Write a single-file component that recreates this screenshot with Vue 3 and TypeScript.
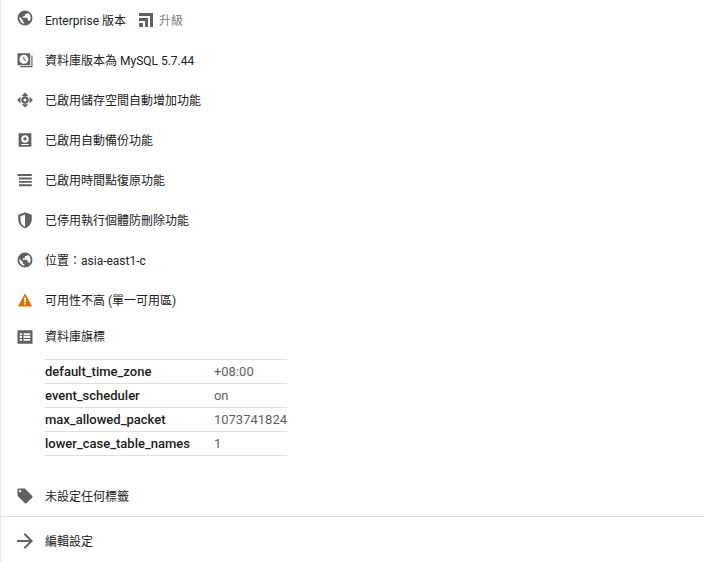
<script setup lang="ts">
interface SummaryRow {
  icon: string;
  text: string;
  upgrade?: boolean;
}

const rows: SummaryRow[] = [
  { icon: 'public', text: 'Enterprise 版本', upgrade: true },
  { icon: 'version', text: '資料庫版本為 MySQL 5.7.44' },
  { icon: 'storage', text: '已啟用儲存空間自動增加功能' },
  { icon: 'backup', text: '已啟用自動備份功能' },
  { icon: 'lines', text: '已啟用時間點復原功能' },
  { icon: 'shield', text: '已停用執行個體防刪除功能' },
  { icon: 'public', text: '位置：asia-east1-c' },
  { icon: 'warning', text: '可用性不高 (單一可用區)' },
];

const flags = [
  { name: 'default_time_zone', value: '+08:00' },
  { name: 'event_scheduler', value: 'on' },
  { name: 'max_allowed_packet', value: '1073741824' },
  { name: 'lower_case_table_names', value: '1' },
];
</script>

<template>
  <div class="panel">
    <div v-for="row in rows" :key="row.text" class="row">
      <span class="icon-box">
        <svg viewBox="0 0 24 24" width="18" height="18" :class="{ warn: row.icon === 'warning' }">
          <path v-if="row.icon === 'public'" fill-rule="evenodd" d="M12 2a10 10 0 1 0 0 20 10 10 0 0 0 0-20zM11 19.500c-3.800-.5-6.500-3.700-6.500-7.500 0-.6.100-1.100.2-1.600L9 14.500v1.300c0 1.100.9 2 2 2zM18 16.200c-.4-.7-1-1.200-1.900-1.200h-.6v-2.500c0-.6-.4-1-1-1H9V9.500h2c.6 0 1-.4 1-1V6.500h2c1 0 1.700-.6 1.800-1.500 2.300 1.200 3.700 4 3.700 7 0 1.600-.6 3-1.500 4.200z" />
          <template v-else-if="row.icon === 'version'">
            <path fill-rule="evenodd" d="M2 3h17v16H2zM10.500 5a6 6 0 1 0 0 12 6 6 0 0 0 0-12z" />
            <path d="M9.800 7.500h1.400v3.200l2.500 1.500-.7 1.100-3.200-1.900z" />
            <path d="M20.500 6H22v15.500H5.500V20h15z" />
          </template>
          <template v-else-if="row.icon === 'storage'">
            <path d="M12 2 16.500 6.500h-9zM12 22 7.500 17.500h9zM1.500 12 6 7.500v9zM22.500 12 18 16.500v-9z" />
            <path fill-rule="evenodd" d="M12 7a5 5 0 1 1 0 10 5 5 0 0 1 0-10zm0 3a2 2 0 1 0 0 4 2 2 0 0 0 0-4z" />
          </template>
          <template v-else-if="row.icon === 'backup'">
            <path fill-rule="evenodd" d="M3.500 3h17v18h-17zM12 5.500a5 5 0 1 0 0 10 5 5 0 0 0 0-10zM7 17.200v1.300h10v-1.300z" />
            <circle cx="12" cy="10.500" r="2.200" />
          </template>
          <path v-else-if="row.icon === 'lines'" d="M2 4h19v2.600H2zM4 8.600h17v2.600H4zM4 13.200h17v2.600H4zM4 17.800h17v2.600H4z" />
          <path v-else-if="row.icon === 'shield'" fill-rule="evenodd" d="M12 1.500 3 5v6c0 5.550 3.840 10.740 9 12 5.160-1.260 9-6.450 9-12V5zm0 3v16.400c-3.400-1.100-6-5.200-6-9.400V7.100z" />
          <path v-else-if="row.icon === 'warning'" fill-rule="evenodd" d="M12 3 2.500 20.500h19zm-1.200 5.500h2.400v6h-2.400zm0 7.200h2.400v2.300h-2.400z" />
        </svg>
      </span>
      <span class="label">{{ row.text }}</span>
      <span v-if="row.upgrade" class="upgrade">
        <svg viewBox="0 0 14 14" width="14" height="14">
          <path d="M0 0h14v14h-3V3H0zM0 5h9v9H6V8H0zM0 10h4v4H0z" />
        </svg>
        <span class="label">升級</span>
      </span>
    </div>

    <div class="row flags-title">
      <span class="icon-box">
        <svg viewBox="0 0 24 24" width="18" height="18">
          <path fill-rule="evenodd" d="M2 3h20v18H2zM5 7v2.500h3V7zM10 7v2.500h9V7zM5 10.800v2.500h3v-2.500zM10 10.800v2.500h9v-2.500zM5 14.600v2.500h3v-2.500zM10 14.600v2.500h9v-2.500z" />
        </svg>
      </span>
      <span class="label">資料庫旗標</span>
    </div>

    <table class="flags">
      <tbody>
        <tr v-for="flag in flags" :key="flag.name">
          <td class="flag-name">{{ flag.name }}</td>
          <td class="flag-value">{{ flag.value }}</td>
        </tr>
      </tbody>
    </table>

    <div class="row">
      <span class="icon-box">
        <svg viewBox="0 0 24 24" width="18" height="18">
          <path fill-rule="evenodd" d="M21.400 11.600 12.400 2.600C12 2.200 11.500 2 11 2H4c-1.100 0-2 .9-2 2v7c0 .55.220 1.050.590 1.420l9 9c.360.360.860.580 1.410.580s1.050-.220 1.410-.590l7-7c.370-.360.590-.860.590-1.410s-.230-1.060-.600-1.400zM5.500 7a1.500 1.500 0 1 1 0-3 1.500 1.500 0 0 1 0 3z" />
        </svg>
      </span>
      <span class="label">未設定任何標籤</span>
    </div>

    <div class="row footer">
      <span class="icon-box">
        <svg viewBox="0 0 24 24" width="24" height="24">
          <path d="M12 4l-1.410 1.410L16.170 11H4v2h12.170l-5.580 5.590L12 20l8-8z" />
        </svg>
      </span>
      <span class="label">編輯設定</span>
    </div>
  </div>
</template>

<style scoped>
.panel {
  height: 562px;
  overflow: hidden;
  box-sizing: border-box;
  border-left: 1px solid #e8e8e8;
  font-family: Roboto, "Noto Sans CJK TC", sans-serif;
  font-size: 12px;
  color: #212121;
  background: #fff;
}

.row {
  display: flex;
  align-items: center;
  height: 40px;
}

.row:first-child .icon-box {
  margin-top: -5px;
}

.icon-box {
  width: 44px;
  flex: none;
  display: flex;
  padding-left: 15px;
  box-sizing: border-box;
}

.icon-box svg {
  fill: #616161;
}

.icon-box svg.warn {
  fill: #e56e00;
}

.label {
  margin-bottom: 2px;
}

.upgrade {
  display: flex;
  align-items: center;
  gap: 6px;
  margin-left: 13px;
  color: #808080;
}

.upgrade svg {
  fill: #616161;
}

.flags-title {
  height: 34px;
}

.flags-title .label {
  margin-bottom: 4px;
}

.flags {
  margin: 5px 0 20px 44px;
  width: 242px;
  border-collapse: collapse;
  font-size: 13px;
}

.flags td {
  height: 23px;
  padding: 0;
  border-top: 1px solid #e0e0e0;
  border-bottom: 1px solid #e0e0e0;
  white-space: nowrap;
}

.flag-name {
  width: 169px;
  font-weight: 500;
}

.flag-value {
  color: #616161;
}

.footer {
  height: 48px;
  border-top: 1px solid #e0e0e0;
}

.footer .icon-box {
  padding-left: 12px;
}
</style>

<style>
html,
body {
  margin: 0;
  overflow: hidden;
}
</style>
